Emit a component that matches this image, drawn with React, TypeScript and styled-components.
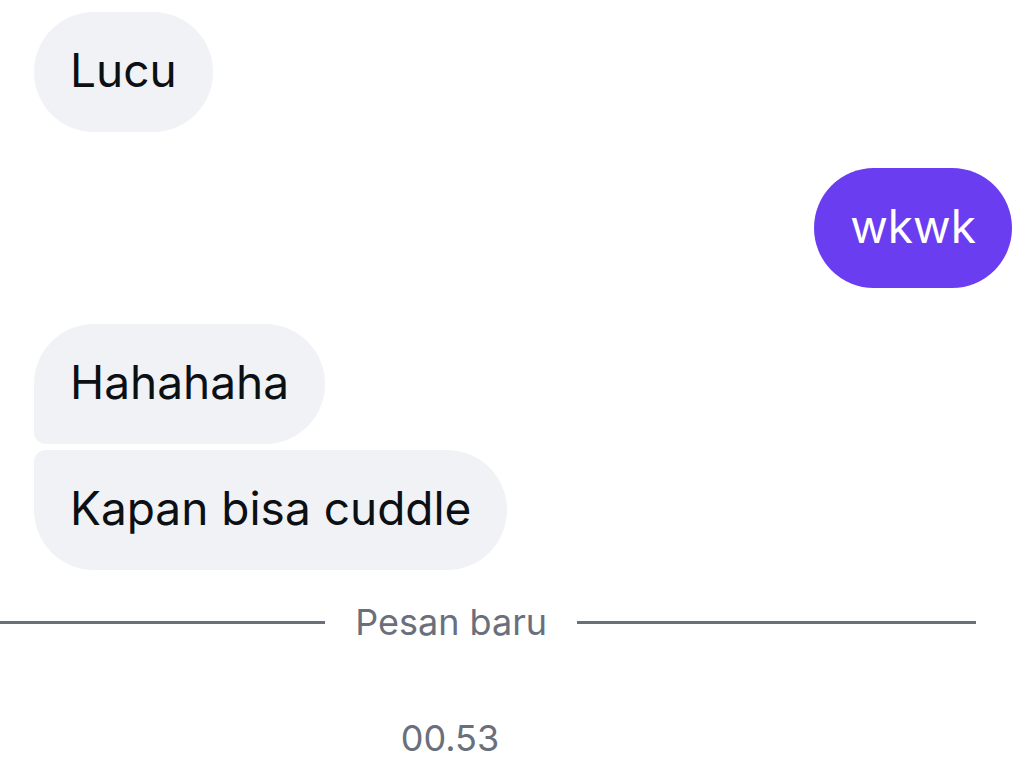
import React from 'react';
import styled, { createGlobalStyle } from 'styled-components';

const GlobalStyle = createGlobalStyle`
  * { box-sizing: border-box; }
  body {
    margin: 0;
    background: #ffffff;
    font-family: Inter, "Liberation Sans", sans-serif;
  }
`;

const Conversation = styled.main`
  display: flex;
  flex-direction: column;
  gap: 36px;
  padding-top: 12px;
`;

const Group = styled.section<{ $own?: boolean }>`
  display: flex;
  flex-direction: column;
  align-items: ${({ $own }) => ($own ? 'flex-end' : 'flex-start')};
  gap: 6px;
  padding: 0 24px 0 34px;
`;

const Bubble = styled.p<{ $own?: boolean }>`
  margin: 0;
  padding: 28px 36px 32px;
  border-radius: 60px;
  background: ${({ $own }) => ($own ? '#6a3df0' : '#f0f2f6')};
  color: ${({ $own }) => ($own ? '#ffffff' : '#0c1014')};
  font-size: 46px;
  line-height: 60px;

  ${Group} > &:not(:last-child) {
    border-bottom-left-radius: 12px;
  }
  ${Group} > &:not(:first-child) {
    border-top-left-radius: 12px;
  }
`;

const Notices = styled.footer`
  display: flex;
  flex-direction: column;
  gap: 74px;
  margin-top: -4px;
  color: #6a6f7c;
  font-size: 36px;
  line-height: 44px;
`;

const Divider = styled.div`
  display: flex;
  align-items: center;
  gap: 30px;
  height: 40px;
  padding-right: 60px;

  &::before,
  &::after {
    content: '';
    height: 3px;
    background: #6a6f7c;
  }
  &::before { flex: 326; }
  &::after { flex: 400; }
`;

const Timestamp = styled.time`
  padding-right: 136px;
  text-align: center;
`;

export default function App() {
  return (
    <>
      <GlobalStyle />
      <Conversation>
        <Group>
          <Bubble>Lucu</Bubble>
        </Group>
        <Group $own>
          <Bubble $own>wkwk</Bubble>
        </Group>
        <Group>
          <Bubble>Hahahaha</Bubble>
          <Bubble>Kapan bisa cuddle</Bubble>
        </Group>
        <Notices>
          <Divider role="separator">Pesan baru</Divider>
          <Timestamp dateTime="00:53">00.53</Timestamp>
        </Notices>
      </Conversation>
    </>
  );
}
